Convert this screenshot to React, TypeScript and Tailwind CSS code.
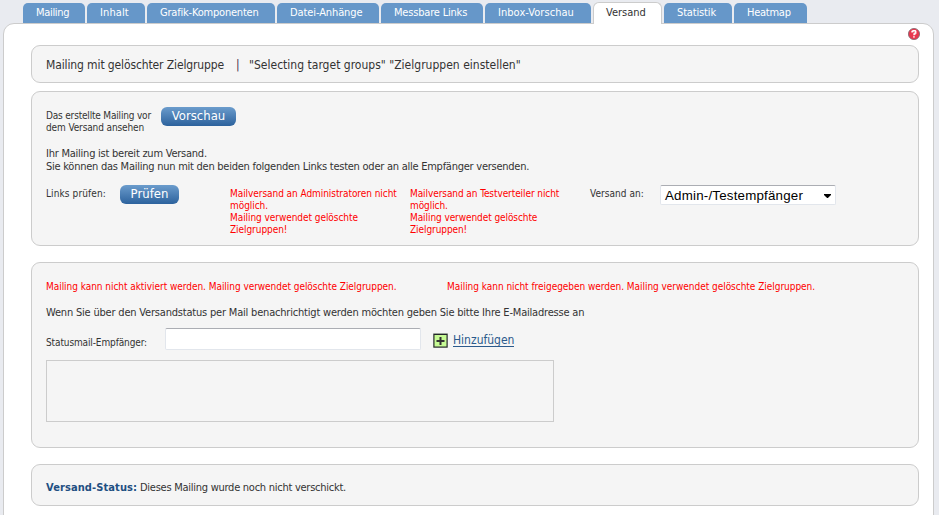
import { ReactNode } from "react";

const tabs = [
  { label: "Mailing", size: "w-[62px]", tracking: "tracking-[-0.32px]" },
  { label: "Inhalt", size: "w-[58px]", tracking: "tracking-[0.1px]" },
  { label: "Grafik-Komponenten", size: "w-[128px]", tracking: "tracking-[-0.2px]" },
  { label: "Datei-Anhänge", size: "w-[102px]", tracking: "tracking-[-0.1px]" },
  { label: "Messbare Links", size: "w-[102px]", tracking: "tracking-[-0.19px]" },
  { label: "Inbox-Vorschau", size: "w-[106px]", tracking: "tracking-[0.05px]" },
  { label: "Versand", size: "w-[69px]", tracking: "tracking-normal", active: true },
  { label: "Statistik", size: "w-[68px]", tracking: "tracking-[-0.15px]" },
  { label: "Heatmap", size: "w-[73px]", tracking: "tracking-[-0.25px]" },
];

function Tab({ label, size, tracking, active }: { label: string; size: string; tracking: string; active?: boolean }) {
  const look = active
    ? "relative z-10 h-[22px] rounded-t-[6px] border border-b-0 border-[#cccccc] bg-white pl-[12px] leading-[20px] text-[#333333]"
    : "mb-px h-5 rounded-t-[5px] bg-[#6697c9] pl-[13px] leading-[20px] text-white";
  return <a className={`block shrink-0 whitespace-nowrap text-[11px] ${size} ${tracking} ${look}`}>{label}</a>;
}

function Box({ className, children }: { className: string; children: ReactNode }) {
  return (
    <section className={`rounded-[9px] border border-[#cccccc] bg-[#f5f5f5] pl-[14px] ${className}`}>{children}</section>
  );
}

function Button({ className, children }: { className: string; children: ReactNode }) {
  return (
    <button
      className={`flex h-[19px] shrink-0 items-start justify-center rounded-[6px] bg-linear-to-b from-[#6b9ccc] to-[#2c629d] text-[13px] leading-[17px] text-white ${className}`}
    >
      {children}
    </button>
  );
}

function HelpIcon() {
  return (
    <svg className="block h-3 w-3" viewBox="0 0 12 12">
      <circle cx="6" cy="6" r="5.6" fill="#e8384f" stroke="#7d6870" strokeWidth="0.8" />
      <path d="M4 4.4V3.5h1V2.7h2.2v.8h.6v1.6h-.9v.9H6v1.2" fill="none" stroke="#fff" strokeWidth="1.3" />
      <rect x="5.2" y="8.2" width="1.5" height="1.4" fill="#fff" />
    </svg>
  );
}

function AddIcon() {
  return (
    <svg className="block h-[15px] w-[15px]" viewBox="0 0 15 15">
      <rect x="0" y="0" width="15" height="15" rx="1" fill="#9aa39a" />
      <rect x="1" y="1.5" width="13" height="12.5" fill="#c6fb94" stroke="#26272b" strokeWidth="1" />
      <path d="M7.5 4v8M3.5 8h8" stroke="#333" strokeWidth="2" />
    </svg>
  );
}

export default function App() {
  return (
    <div className="h-[515px] w-[939px] overflow-hidden bg-[#e9ebf0] pt-[2px] font-['DejaVu_Sans_Condensed','DejaVu_Sans',sans-serif] text-[#333333]">
      <nav className="-mb-px flex h-[22px] items-end gap-[2px] pl-[23px]">
        {tabs.map((tab) => (
          <Tab key={tab.label} {...tab} />
        ))}
      </nav>

      <main className="ml-[3px] h-[520px] w-[931px] rounded-t-[11px] border border-[#cccccc] bg-white pl-[27px] pr-[14px]">
        <div className="flex h-[21px] justify-end pt-1">
          <div className="-mr-px">
            <HelpIcon />
          </div>
        </div>

        <Box className="flex h-[38px] items-center whitespace-pre pt-[2px] text-[12px] leading-4">
          <span className="w-[189px] tracking-[-0.12px]">Mailing mit gelöschter Zielgruppe</span>
          <span className="w-[14px] pl-px text-[#4b2a4f]">|</span>
          <span className="tracking-[0.01px]">"Selecting target groups" "Zielgruppen einstellen"</span>
        </Box>

        <Box className="mt-2 h-[155px] pt-[15px]">
          <div className="flex">
            <p className="w-[115px] whitespace-nowrap pt-[3px] text-[10px] leading-3">
              <span className="block tracking-[-0.18px]">Das erstellte Mailing vor</span>
              <span className="block tracking-[-0.12px]">dem Versand ansehen</span>
            </p>
            <Button className="w-[75px]">Vorschau</Button>
          </div>
          <p className="mt-[13px] whitespace-nowrap text-[11px] leading-[13px]">
            <span className="block tracking-[-0.24px]">Ihr Mailing ist bereit zum Versand.</span>
            <span className="block tracking-[-0.25px]">
              Sie können das Mailing nun mit den beiden folgenden Links testen oder an alle Empfänger versenden.
            </span>
          </p>
          <div className="mt-3 flex whitespace-nowrap text-[10px] leading-3">
            <span className="w-[74px] pt-[3px] tracking-[0.1px]">Links prüfen:</span>
            <Button className="w-[59px]">Prüfen</Button>
            <p className="ml-[51px] w-[180px] pt-[3px] tracking-[-0.06px] text-[#ff0000]">
              Mailversand an Administratoren nicht
              <br />
              möglich.
              <br />
              Mailing verwendet gelöschte
              <br />
              Zielgruppen!
            </p>
            <p className="w-[180px] pt-[3px] tracking-[-0.08px] text-[#ff0000]">
              Mailversand an Testverteiler nicht
              <br />
              möglich.
              <br />
              Mailing verwendet gelöschte
              <br />
              Zielgruppen!
            </p>
            <span className="w-[70px] pt-[3px] tracking-[0.05px]">Versand an:</span>
            <div className="flex h-5 w-[176px] justify-between rounded-[2px] border border-[#e2e6ec] border-t-[#abadb3] bg-white pl-1 pr-1 font-['Liberation_Sans',sans-serif] text-[13.33px] leading-[20px] tracking-[0.2px] text-black">
              <span>Admin-/Testempfänger</span>
              <svg className="mt-2 h-1 w-[7px]" viewBox="0 0 7 4">
                <path d="M0 0h7v1L3.9 4h-.8L0 1z" fill="#000" />
              </svg>
            </div>
          </div>
        </Box>

        <Box className="mt-4 h-[186px] pt-[18px]">
          <div className="flex whitespace-nowrap text-[10px] leading-3 text-[#ff0000]">
            <span className="w-[401px] tracking-[-0.045px]">
              Mailing kann nicht aktiviert werden. Mailing verwendet gelöschte Zielgruppen.
            </span>
            <span className="tracking-[-0.035px]">
              Mailing kann nicht freigegeben werden. Mailing verwendet gelöschte Zielgruppen.
            </span>
          </div>
          <p className="mt-[13px] whitespace-nowrap text-[11px] leading-[13px] tracking-[-0.195px]">
            Wenn Sie über den Versandstatus per Mail benachrichtigt werden möchten geben Sie bitte Ihre E-Mailadresse an
          </p>
          <div className="mt-[9px] flex">
            <label className="w-[119px] whitespace-nowrap pt-[9px] text-[10px] leading-3 tracking-[-0.12px]">
              Statusmail-Empfänger:
            </label>
            <input className="block h-[22px] w-[256px] rounded-[2px] border border-[#e2e6ec] border-t-[#abadb3] bg-white" />
            <div className="ml-3 pt-[5px]">
              <AddIcon />
            </div>
            <a className="ml-[5px] mt-1 h-[15px] border-b border-[#2b5a8c] text-[12px] leading-4 text-[#2b5a8c]">Hinzufügen</a>
          </div>
          <div className="mt-[10px] h-[62px] w-[508px] border border-[#cccccc]" />
        </Box>

        <Box className="mt-4 flex h-[42px] items-center whitespace-nowrap pt-[5px] text-[11px] leading-4">
          <strong className="w-[94px] font-bold tracking-[0.1px] text-[#1f4f82]">Versand-Status:</strong>
          <span className="tracking-[-0.26px]">Dieses Mailing wurde noch nicht verschickt.</span>
        </Box>
      </main>
    </div>
  );
}
